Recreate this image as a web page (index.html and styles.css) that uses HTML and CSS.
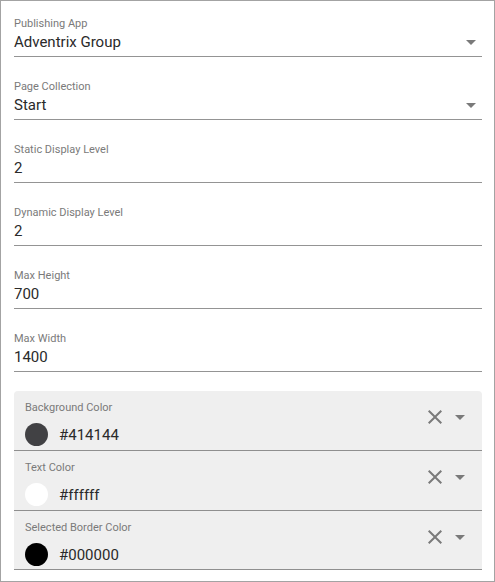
FILE: index.html
```html
<!DOCTYPE html>
<html>
<head>
<meta charset="utf-8">
<link rel="stylesheet" href="styles.css">
</head>
<body>
<div class="panel">
  <div class="fields">
    <div class="field">
      <div class="label">Publishing App</div>
      <div class="value-row">
        <span class="value">Adventrix Group</span>
        <svg class="drop" viewBox="0 0 24 24" width="24" height="24"><path d="M7 10l5 5 5-5z"/></svg>
      </div>
    </div>
    <div class="field">
      <div class="label">Page Collection</div>
      <div class="value-row">
        <span class="value">Start</span>
        <svg class="drop" viewBox="0 0 24 24" width="24" height="24"><path d="M7 10l5 5 5-5z"/></svg>
      </div>
    </div>
    <div class="field">
      <div class="label">Static Display Level</div>
      <div class="value-row"><span class="value">2</span></div>
    </div>
    <div class="field">
      <div class="label">Dynamic Display Level</div>
      <div class="value-row"><span class="value">2</span></div>
    </div>
    <div class="field">
      <div class="label">Max Height</div>
      <div class="value-row"><span class="value">700</span></div>
    </div>
    <div class="field">
      <div class="label">Max Width</div>
      <div class="value-row"><span class="value">1400</span></div>
    </div>
  </div>

  <div class="colors">
    <div class="color-row">
      <div class="color-main">
        <div class="label">Background Color</div>
        <div class="swatch-row">
          <span class="swatch sw-dark"></span>
          <span class="value">#414144</span>
        </div>
      </div>
      <div class="actions">
        <svg viewBox="0 0 24 24" width="24" height="24"><path d="M19 6.41L17.59 5 12 10.59 6.41 5 5 6.41 10.59 12 5 17.59 6.41 19 12 13.41 17.59 19 19 17.59 13.41 12z"/></svg>
        <svg viewBox="0 0 24 24" width="24" height="24"><path d="M7 10l5 5 5-5z"/></svg>
      </div>
    </div>
    <div class="color-row">
      <div class="color-main">
        <div class="label">Text Color</div>
        <div class="swatch-row">
          <span class="swatch sw-white"></span>
          <span class="value">#ffffff</span>
        </div>
      </div>
      <div class="actions">
        <svg viewBox="0 0 24 24" width="24" height="24"><path d="M19 6.41L17.59 5 12 10.59 6.41 5 5 6.41 10.59 12 5 17.59 6.41 19 12 13.41 17.59 19 19 17.59 13.41 12z"/></svg>
        <svg viewBox="0 0 24 24" width="24" height="24"><path d="M7 10l5 5 5-5z"/></svg>
      </div>
    </div>
    <div class="color-row">
      <div class="color-main">
        <div class="label">Selected Border Color</div>
        <div class="swatch-row">
          <span class="swatch sw-black"></span>
          <span class="value">#000000</span>
        </div>
      </div>
      <div class="actions">
        <svg viewBox="0 0 24 24" width="24" height="24"><path d="M19 6.41L17.59 5 12 10.59 6.41 5 5 6.41 10.59 12 5 17.59 6.41 19 12 13.41 17.59 19 19 17.59 13.41 12z"/></svg>
        <svg viewBox="0 0 24 24" width="24" height="24"><path d="M7 10l5 5 5-5z"/></svg>
      </div>
    </div>
  </div>
</div>
</body>
</html>
```

FILE: styles.css
```css
* { box-sizing: border-box; }
html, body { margin: 0; padding: 0; background: #ffffff; }
body { font-family: Roboto, "Liberation Sans", sans-serif; }

.panel {
  width: 495px;
  height: 582px;
  border: 1px solid #a3a3a3;
  padding: 0 12px 0 13px;
}

.fields {
  display: flex;
  flex-direction: column;
  gap: 7px;
}

.field {
  padding: 15px 0 4px;
  border-bottom: 1px solid #949494;
}

.label {
  font-size: 11px;
  line-height: 16px;
  color: #7a7a7a;
  white-space: nowrap;
}

.value-row {
  display: flex;
  align-items: center;
  justify-content: space-between;
  height: 20px;
}

.value {
  font-size: 15px;
  line-height: 20px;
  color: #2a2a2a;
  white-space: nowrap;
}

.drop {
  fill: #7a7a7a;
  margin-right: -1px;
  flex: none;
}

.colors {
  margin-top: 19px;
  background: #efefef;
  border-radius: 4px 4px 0 0;
}

.color-row {
  display: flex;
  height: 60px;
  padding: 9px 10px 0 11px;
  border-bottom: 1px solid #8f8f8f;
}
.color-row:last-child { height: 59px; }

.color-main {
  flex: 1;
}

.swatch-row {
  display: flex;
  align-items: center;
  gap: 11px;
  margin-top: 7px;
}

.swatch {
  width: 23px;
  height: 23px;
  border-radius: 50%;
  flex: none;
}
.sw-dark { background: #414144; }
.sw-white { background: #ffffff; }
.sw-black { background: #000000; }

.actions {
  display: flex;
  margin-top: 5px;
  align-self: flex-start;
}
.actions svg { fill: #7a7a7a; flex: none; }
.actions svg + svg { margin-left: 1px; }
```
